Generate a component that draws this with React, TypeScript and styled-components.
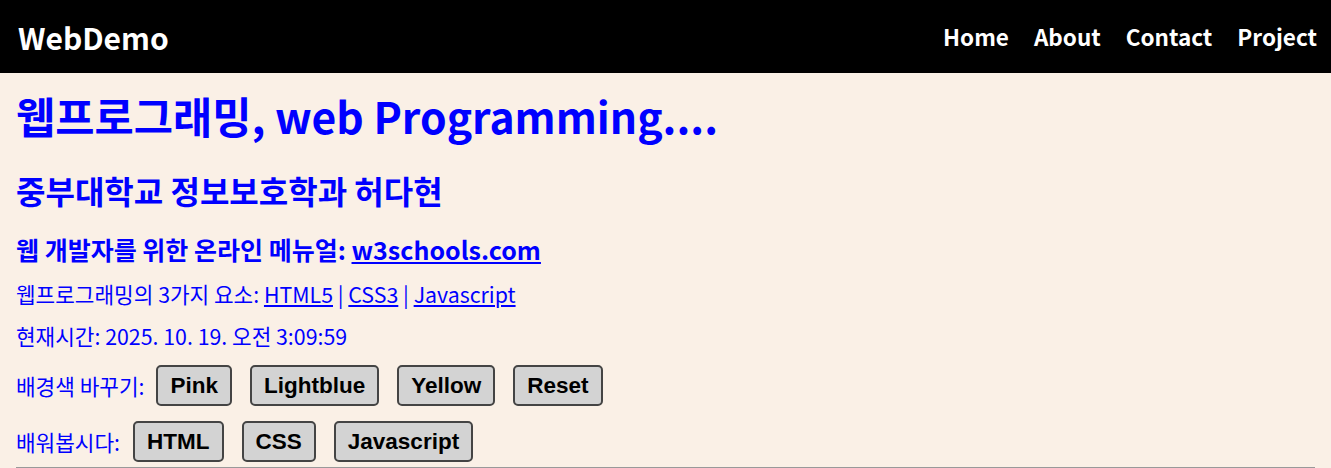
import React, { useState } from 'react'
import styled, { createGlobalStyle } from 'styled-components'

const GlobalStyle = createGlobalStyle`
  html, body {
    margin: 0;
    padding: 0;
  }
  body {
    background: #faf0e6;
    font-family: 'Noto Sans CJK KR', 'Noto Sans', sans-serif;
  }
`

const HeaderFrame = styled.header`
  display: flex;
  align-items: center;
  justify-content: space-between;
  height: 73px;
  padding: 0 14px 0 18px;
  background: #000;
  color: #fff;
`

const Logo = styled.div`
  font-size: 30px;
  font-weight: 700;
  line-height: 1;
`

const NavLinks = styled.nav`
  display: flex;
  align-items: center;
  gap: 25px;
  margin-top: -2px;
`

const NavLink = styled.a`
  color: #fff;
  font-size: 22.5px;
  font-weight: 700;
  text-decoration: none;
`

const Main = styled.main`
  display: flex;
  flex-direction: column;
  padding: 0 16px;
  color: #0000ff;
`

const Title = styled.h1`
  margin: 15px 0 0;
  font-size: 42.67px;
  line-height: 56px;
  font-weight: 700;
`

const SubTitle = styled.h2`
  margin: 25px 0 0;
  font-size: 32px;
  line-height: 42px;
  font-weight: 700;
`

const Heading = styled.h3`
  margin: 21px 0 0;
  font-size: 25px;
  line-height: 34px;
  font-weight: 700;

  a {
    color: #0000ff;
  }
`

const Line = styled.p`
  margin: 14px 0 0;
  font-size: 21.33px;
  line-height: 28px;

  a {
    color: #0000ff;
  }
`

const ButtonRow = styled.div<{ $lead: number }>`
  display: flex;
  align-items: center;
  gap: 18px;
  margin-top: 15px;
  font-size: 21.33px;

  & > span {
    margin-right: ${({ $lead }) => $lead - 18}px;
  }
`

const Label = styled.span``

const Button = styled.button`
  font-family: 'Liberation Sans', Arial, sans-serif;
  font-size: 22.5px;
  font-weight: 700;
  line-height: 27px;
  padding: 5px 12px;
  color: #000;
  background: #d3d3d3;
  border: 2px solid #444;
  border-radius: 5px;
  cursor: pointer;
`

const Rule = styled.hr`
  margin: 5px 0 0;
  border: none;
  border-top: 1px solid #999;
  border-bottom: 1px solid #ddd;
`

const COLORS: { [name: string]: string } = {
  Pink: 'pink',
  Lightblue: 'lightblue',
  Yellow: 'yellow',
  Reset: '#faf0e6'
}

export default function App() {
  const [bg, setBg] = useState('#faf0e6')

  return (
    <>
      <GlobalStyle />
      <div style={{ background: bg }}>
        <HeaderFrame>
          <Logo>WebDemo</Logo>
          <NavLinks>
            <NavLink href="#">Home</NavLink>
            <NavLink href="#">About</NavLink>
            <NavLink href="#">Contact</NavLink>
            <NavLink href="#">Project</NavLink>
          </NavLinks>
        </HeaderFrame>
        <Main>
          <Title>웹프로그래밍, web Programming....</Title>
          <SubTitle>중부대학교 정보보호학과 허다현</SubTitle>
          <Heading>
            웹 개발자를 위한 온라인 메뉴얼: <a href="#">w3schools.com</a>
          </Heading>
          <Line>
            웹프로그래밍의 3가지 요소: <a href="#">HTML5</a> | <a href="#">CSS3</a> |{' '}
            <a href="#">Javascript</a>
          </Line>
          <Line>현재시간: 2025. 10. 19. 오전 3:09:59</Line>
          <ButtonRow $lead={12}>
            <Label>배경색 바꾸기:</Label>
            {Object.keys(COLORS).map((name) => (
              <Button key={name} onClick={() => setBg(COLORS[name])}>
                {name}
              </Button>
            ))}
          </ButtonRow>
          <ButtonRow $lead={13}>
            <Label>배워봅시다:</Label>
            <Button>HTML</Button>
            <Button>CSS</Button>
            <Button>Javascript</Button>
          </ButtonRow>
          <Rule />
        </Main>
      </div>
    </>
  )
}
